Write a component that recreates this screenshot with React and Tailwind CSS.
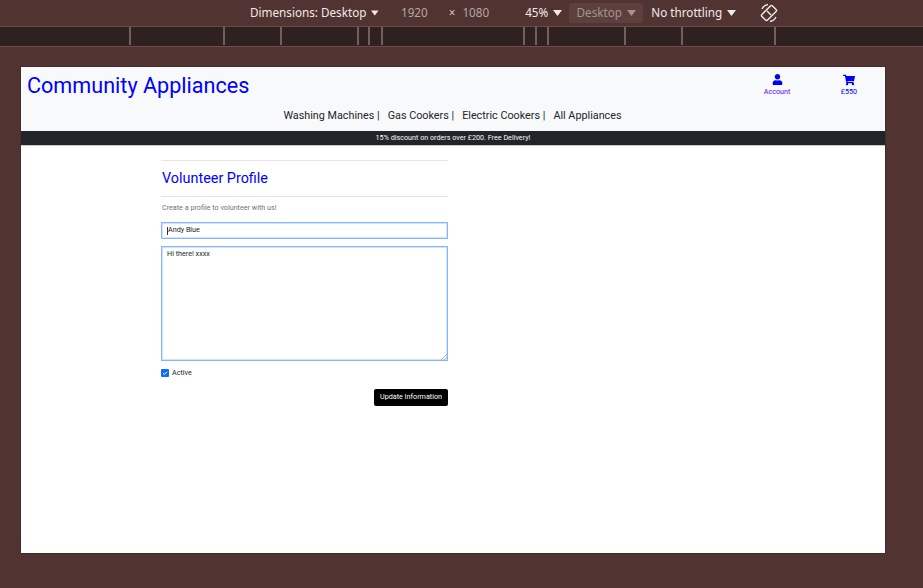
import React from "react";
import { FaUser, FaShoppingCart } from "react-icons/fa";

const Caret = () => (
  <svg width="9" height="6" viewBox="0 0 9 6" className="ml-[5px]">
    <path d="M0 0h9L4.5 6z" fill="currentColor" />
  </svg>
);

const Toolbar = () => (
  <div className="flex h-[26px] items-center whitespace-nowrap pl-[250px] text-[11.7px] text-[#f1e9e7]">
    <span className="flex w-[129px] items-center">
      Dimensions: Desktop
      <Caret />
    </span>
    <span className="ml-[22px] text-[#b5a6a4]">1920</span>
    <span className="ml-[21px] text-[#cfc3c1]">×</span>
    <span className="ml-[7px] text-[#b5a6a4]">1080</span>
    <span className="ml-[36px] flex items-center">
      45%
      <Caret />
    </span>
    <span className="ml-[7px] flex h-[20px] w-[74px] items-center justify-center rounded-[3px] bg-[#5d3f3d] text-[#a39492]">
      Desktop
      <Caret />
    </span>
    <span className="ml-[8px] flex items-center">
      No throttling
      <Caret />
    </span>
    <svg width="20" height="20" viewBox="0 0 20 20" className="ml-[23px]" fill="none" stroke="#f1e9e7" strokeWidth="1.4">
      <rect x="6" y="2.5" width="8" height="15" rx="1.5" transform="rotate(45 10 10)" />
      <path d="M8 8l4 4M3 6a8 8 0 0 1 6-4.5M17 14a8 8 0 0 1-6 4.5" />
    </svg>
  </div>
);

const Tick = ({ className }) => <div className={`h-[18px] w-[2px] bg-[#6f5f5d] ${className}`} />;

const Ruler = () => (
  <div className="flex h-[21px] border-y border-[#6b4b48] bg-[#2f2120]">
    <Tick className="ml-[129px]" />
    <Tick className="ml-[92px]" />
    <Tick className="ml-[55px]" />
    <Tick className="ml-[75px]" />
    <Tick className="ml-[9px]" />
    <Tick className="ml-[11px]" />
    <Tick className="ml-[140px]" />
    <Tick className="ml-[10px]" />
    <Tick className="ml-[10px]" />
    <Tick className="ml-[75px]" />
    <Tick className="ml-[55px]" />
    <Tick className="ml-[91px]" />
  </div>
);

const Header = () => (
  <div className="h-[64px] bg-[#f8f9fa]">
    <div className="flex h-[39px]">
      <h1 className="ml-[6px] mt-[5px] text-[21.6px] leading-[28px] text-[#0000ff]">Community Appliances</h1>
      <div className="ml-auto mr-[16px] flex pt-[7px] text-[#0000ff]">
        <div className="flex w-[40px] flex-col items-center">
          <FaUser className="text-[11px]" />
          <span className="mt-[2px] text-[7.2px] leading-[9px] text-[#5a00ff]">Account</span>
        </div>
        <div className="ml-[32px] flex w-[40px] flex-col items-center">
          <FaShoppingCart className="text-[12px]" />
          <span className="mt-[1px] text-[7.2px] leading-[9px]">£550</span>
        </div>
      </div>
    </div>
    <div className="flex justify-center gap-[8px] pr-[1px] pt-[3px] text-[10.8px] leading-[14px] text-[#212529]">
      <span>Washing Machines |</span>
      <span>Gas Cookers |</span>
      <span>Electric Cookers |</span>
      <span>All Appliances</span>
    </div>
  </div>
);

const ProfileForm = () => (
  <div className="ml-[140px] w-[287px] pt-[14px]">
    <div className="border-y border-[#e5e5e5] py-[6px]">
      <h2 className="ml-px text-[14.4px] leading-[23px] text-[#0000ff]">Volunteer Profile</h2>
    </div>
    <p className="ml-px mt-[6px] text-[7.2px] leading-[10px] text-[#6c757d]">Create a profile to volunteer with us!</p>
    <div className="mt-[9px] flex h-[17px] items-center border border-[#86b7fe] pl-[5px] text-[7.2px] text-[#212529] shadow-[inset_0_0_0_1px_#cfe2ff]">
      <span className="h-[8px] w-px bg-[#333]" />
      Andy Blue
    </div>
    <div className="relative mt-[7px] h-[115px] border border-[#86b7fe] pl-[5px] pt-[2px] text-[7.2px] leading-[10px] text-[#212529] shadow-[inset_0_0_0_1px_#cfe2ff]">
      Hi there! xxxx
      <svg width="6" height="6" viewBox="0 0 6 6" className="absolute bottom-0 right-0" stroke="#999" strokeWidth="0.7">
        <path d="M0 6l6-6M3 6l3-3" />
      </svg>
    </div>
    <div className="mt-[7px] flex items-center gap-[3px]">
      <span className="flex h-[8px] w-[8px] items-center justify-center rounded-[1px] bg-[#0d6efd]">
        <svg width="6" height="6" viewBox="0 0 6 6" fill="none" stroke="white" strokeWidth="1">
          <path d="M1 3.2l1.4 1.3L5 1.8" />
        </svg>
      </span>
      <span className="text-[7.2px] leading-[10px] text-[#212529]">Active</span>
    </div>
    <div className="mt-[11px] flex justify-end">
      <button className="h-[17px] w-[74px] rounded-[2px] bg-black text-[7.2px] text-white">Update Information</button>
    </div>
  </div>
);

const App = () => {
  return (
    <div className="h-[588px] w-[923px] overflow-hidden bg-[#513432] font-['Roboto',sans-serif]">
      <div className="font-['Noto_Sans',sans-serif]">
        <Toolbar />
        <Ruler />
      </div>
      <div className="ml-[21px] mt-[20px] h-[486px] w-[864px] bg-white shadow-[0_0_1px_#000]">
        <Header />
        <div className="flex h-[15px] items-center justify-center border-b border-[#c9c9c9] bg-[#212529] text-[7.2px] text-[#f8f9fa]">
          15% discount on orders over £200. Free Delivery!
        </div>
        <ProfileForm />
      </div>
    </div>
  );
};

export default App;
